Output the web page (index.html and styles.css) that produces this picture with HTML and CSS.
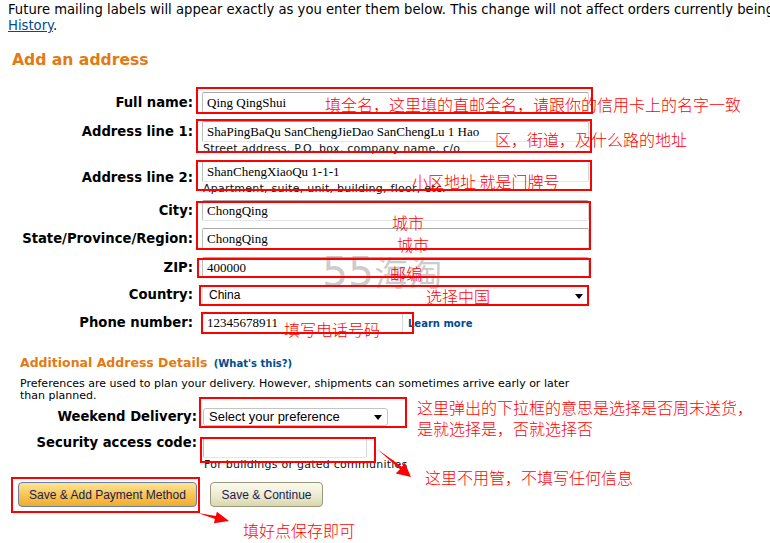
FILE: index.html
```html
<!DOCTYPE html>
<html lang="en">
<head>
<meta charset="utf-8">
<title>Add an address</title>
<link rel="stylesheet" href="styles.css">
</head>
<body>
<div class="page">
  <p class="intro"><span class="nowrap">Future mailing labels will appear exactly as you enter them below. This change will not affect orders currently being processed.</span><br><a class="link" href="#">History</a>.</p>

  <h2 class="title">Add an address</h2>

  <div class="form">
    <div class="row">
      <span class="lbl">Full name:</span>
      <div class="field"><div class="input">Qing QingShui</div></div>
    </div>
    <div class="row row-addr1">
      <span class="lbl">Address line 1:</span>
      <div class="field"><div class="input">ShaPingBaQu SanChengJieDao SanChengLu 1 Hao</div><div class="hint">Street address, P.O. box, company name, c/o</div></div>
    </div>
    <div class="row row-addr2">
      <span class="lbl lbl-center">Address line 2:</span>
      <div class="field"><div class="input">ShanChengXiaoQu 1-1-1</div><div class="hint">Apartment, suite, unit, building, floor, etc.</div></div>
    </div>
    <div class="row row-city">
      <span class="lbl">City:</span>
      <div class="field"><div class="input">ChongQing</div></div>
    </div>
    <div class="row row-state">
      <span class="lbl">State/Province/Region:</span>
      <div class="field"><div class="input">ChongQing</div></div>
    </div>
    <div class="row row-zip">
      <span class="lbl">ZIP:</span>
      <div class="field"><div class="input">400000</div></div>
    </div>
    <div class="row row-country">
      <span class="lbl">Country:</span>
      <div class="field"><div class="select">China<span class="caret"></span></div></div>
    </div>
    <div class="row row-phone">
      <span class="lbl">Phone number:</span>
      <div class="field field-inline"><div class="input input-phone">12345678911</div><a class="learn" href="#">Learn more</a></div>
    </div>
  </div>

  <h3 class="sub">Additional Address Details <a class="whats" href="#">(What's this?)</a></h3>
  <p class="pref">Preferences are used to plan your delivery. However, shipments can sometimes arrive early or later<br>than planned.</p>

  <div class="form2">
    <div class="row2 row-weekend">
      <span class="lbl2">Weekend Delivery:</span>
      <div class="sel2">Select your preference<span class="caret caret-2"></span></div>
    </div>
    <div class="row2 row-sec">
      <span class="lbl2 lbl-sec">Security access code:</span>
      <div class="field"><div class="input input-sec"></div><div class="hint">For buildings or gated communities</div></div>
    </div>
  </div>

  <div class="buttons">
    <button class="btn btn-primary" type="button">Save &amp; Add Payment Method</button>
    <button class="btn btn-secondary" type="button">Save &amp; Continue</button>
  </div>

  <div class="wm">55<span class="wm-cjk">海淘</span></div>

  <div class="box box-1"></div>
  <div class="box box-2"></div>
  <div class="box box-3"></div>
  <div class="box box-4"></div>
  <div class="box box-5"></div>
  <div class="box box-6"></div>
  <div class="box box-7"></div>
  <div class="box box-8"></div>
  <div class="box box-9"></div>
  <div class="box box-10"></div>

  <div class="note note-1">填全名，这里填的直邮全名，请跟你的信用卡上的名字一致</div>
  <div class="note note-2">区，街道，及什么路的地址</div>
  <div class="note note-3">小区地址 就是门牌号</div>
  <div class="note note-4">城市</div>
  <div class="note note-5">城市</div>
  <div class="note note-6">邮编</div>
  <div class="note note-7">选择中国</div>
  <div class="note note-8">填写电话号码</div>
  <div class="note note-9">这里弹出的下拉框的意思是选择是否周末送货，<br>是就选择是，否就选择否</div>
  <div class="note note-10">这里不用管，不填写任何信息</div>
  <div class="note note-11">填好点保存即可</div>

  <svg class="arrows" width="770" height="543" viewBox="0 0 770 543" aria-hidden="true">
    <polygon points="377,449 401.96,466.85 404.7,462.6 411,477 395.7,473.4 400,469.2" fill="#f00"/>
    <polygon points="198,513 215.8,516.05 216.9,511.7 229,521 213.9,523.3 215,518.95" fill="#f00"/>
  </svg>
</div>
</body>
</html>
```

FILE: styles.css
```css
html, body {
  margin: 0;
  padding: 0;
  background: #fff;
}

body {
  font-family: "DejaVu Sans", Verdana, sans-serif;
  color: #000;
}

.page {
  position: relative;
  width: 770px;
  height: 543px;
  overflow: hidden;
  box-sizing: border-box;
  padding: 2px 0 0 8px;
}

.intro {
  margin: 0;
  font-size: 13.2px;
  line-height: 16px;
}

.nowrap {
  white-space: nowrap;
}

.link {
  color: #004b91;
  text-decoration: underline;
}

.title {
  margin: 16px 0 0 4px;
  font-size: 15.6px;
  line-height: 20px;
  font-weight: bold;
  color: #e47911;
}

/* main form */
.form {
  margin-top: 22px;
  display: flex;
  flex-direction: column;
}

.row {
  display: flex;
  align-items: baseline;
}

.row-addr1 { margin-top: 8px; }
.row-addr2 { margin-top: 6px; }
.row-city { margin-top: 5px; }
.row-state { margin-top: 7px; }
.row-zip { margin-top: 8px; }
.row-country { margin-top: 7px; }
.row-phone { margin-top: 6px; }

.lbl {
  flex: none;
  width: 185px;
  margin-right: 9px;
  text-align: right;
  font-size: 13.2px;
  line-height: 16px;
  font-weight: bold;
}

.lbl-center {
  align-self: center;
}

.field {
  display: flex;
  flex-direction: column;
}

.field-inline {
  flex-direction: row;
  align-items: baseline;
  gap: 5px;
}

.input {
  box-sizing: border-box;
  width: 387px;
  height: 21px;
  padding: 1px 4px 0;
  border: 1px solid;
  border-color: #a8a8a8 #d3d7dd #e2e6ec #bcbcbc;
  border-radius: 2px;
  background: #fff;
  font-family: "Liberation Serif", "Times New Roman", serif;
  font-size: 13px;
  line-height: 18px;
  white-space: nowrap;
  color: #000;
}

.input-phone {
  width: 201px;
}

.input-sec {
  width: 164px;
}

.hint {
  font-size: 11px;
  line-height: 13px;
  letter-spacing: 0.25px;
  padding-left: 1px;
  color: #111;
  white-space: nowrap;
}

.select {
  position: relative;
  box-sizing: border-box;
  width: 387px;
  height: 21px;
  padding: 0 6px;
  border: 1px solid #e4e4e4;
  font-family: "Liberation Sans", Arial, sans-serif;
  font-size: 12px;
  line-height: 19px;
}

.caret {
  position: absolute;
  right: 5px;
  top: 8px;
  width: 0;
  height: 0;
  border-left: 4px solid transparent;
  border-right: 4px solid transparent;
  border-top: 5px solid #000;
}

.learn {
  font-size: 10px;
  font-weight: bold;
  color: #004b91;
  text-decoration: none;
}

/* additional details */
.sub {
  margin: 22px 0 0 12px;
  font-size: 12.5px;
  line-height: 16px;
  font-weight: bold;
  color: #e47911;
}

.whats {
  font-size: 10px;
  color: #004b91;
  text-decoration: none;
  margin-left: 2px;
}

.pref {
  margin: 6px 0 0 12px;
  font-size: 11px;
  line-height: 12px;
}

.form2 {
  margin-top: 6px;
  display: flex;
  flex-direction: column;
}

.row2 {
  display: flex;
  align-items: center;
}

.row-sec {
  margin-top: 11px;
  align-items: flex-start;
}

.lbl2 {
  flex: none;
  width: 189px;
  margin-right: 6px;
  text-align: right;
  font-size: 13.2px;
  line-height: 16px;
  font-weight: bold;
}

.lbl-sec {
  line-height: 12px;
}

.sel2 {
  position: relative;
  box-sizing: border-box;
  width: 185px;
  height: 18px;
  padding: 0 5px;
  border: 1px solid #c4c4c4;
  border-radius: 3px;
  background: #fff;
  font-family: "Liberation Sans", Arial, sans-serif;
  font-size: 13px;
  line-height: 16px;
}

.caret-2 {
  right: 5px;
  top: 6px;
}

.buttons {
  margin: 11px 0 0 10px;
  display: flex;
  gap: 13px;
}

.btn {
  box-sizing: border-box;
  height: 25px;
  padding: 0;
  border-radius: 4px;
  font-family: "Liberation Sans", Arial, sans-serif;
  font-size: 12px;
  color: #1b1a55;
  cursor: pointer;
}

.btn-primary {
  width: 179px;
  border: 1px solid #6d7ea3;
  background: linear-gradient(#fde597, #f7c95a 45%, #f0ad2c);
}

.btn-secondary {
  width: 113px;
  border: 1px solid #9a987a;
  background: linear-gradient(#fbfbef, #eeedd2 50%, #d9d7ad);
}

/* watermark */
.wm {
  position: absolute;
  left: 322px;
  top: 250px;
  font-family: "DejaVu Sans", sans-serif;
  font-size: 41px;
  line-height: 44px;
  color: rgba(140, 140, 140, 0.45);
  white-space: nowrap;
}

.wm-cjk {
  font-family: "Noto Sans CJK SC", sans-serif;
  font-size: 34px;
}

/* annotation boxes */
.box {
  position: absolute;
  box-sizing: border-box;
  border: 2px solid #f00;
}

.box-1 { left: 196px; top: 87px; width: 397px; height: 27px; }
.box-2 { left: 196px; top: 119px; width: 396px; height: 34px; }
.box-3 { left: 196px; top: 160px; width: 396px; height: 31px; }
.box-4 { left: 196px; top: 201px; width: 395px; height: 49px; }
.box-5 { left: 197px; top: 258px; width: 394px; height: 20px; }
.box-6 { left: 199px; top: 285px; width: 390px; height: 21px; }
.box-7 { left: 201px; top: 312px; width: 213px; height: 22px; }
.box-8 { left: 199px; top: 397px; width: 208px; height: 31px; }
.box-9 { left: 200px; top: 437px; width: 176px; height: 26px; }
.box-10 { left: 11px; top: 477px; width: 189px; height: 36px; }

/* annotation notes */
.note {
  position: absolute;
  color: #f00;
  font-family: "Noto Sans CJK SC", sans-serif;
  font-weight: 300;
  font-size: 16px;
  line-height: 16px;
  white-space: nowrap;
}

.note-1 { left: 325px; top: 96px; }
.note-2 { left: 495px; top: 131px; }
.note-3 { left: 412px; top: 173px; }
.note-4 { left: 392px; top: 214px; }
.note-5 { left: 397px; top: 236px; }
.note-6 { left: 390px; top: 265px; }
.note-7 { left: 426px; top: 288px; }
.note-8 { left: 284px; top: 321px; }
.note-9 { left: 417px; top: 399px; line-height: 21px; margin-top: -2px; }
.note-10 { left: 425px; top: 469px; }
.note-11 { left: 243px; top: 522px; }

.arrows {
  position: absolute;
  left: 0;
  top: 0;
  pointer-events: none;
}
```
